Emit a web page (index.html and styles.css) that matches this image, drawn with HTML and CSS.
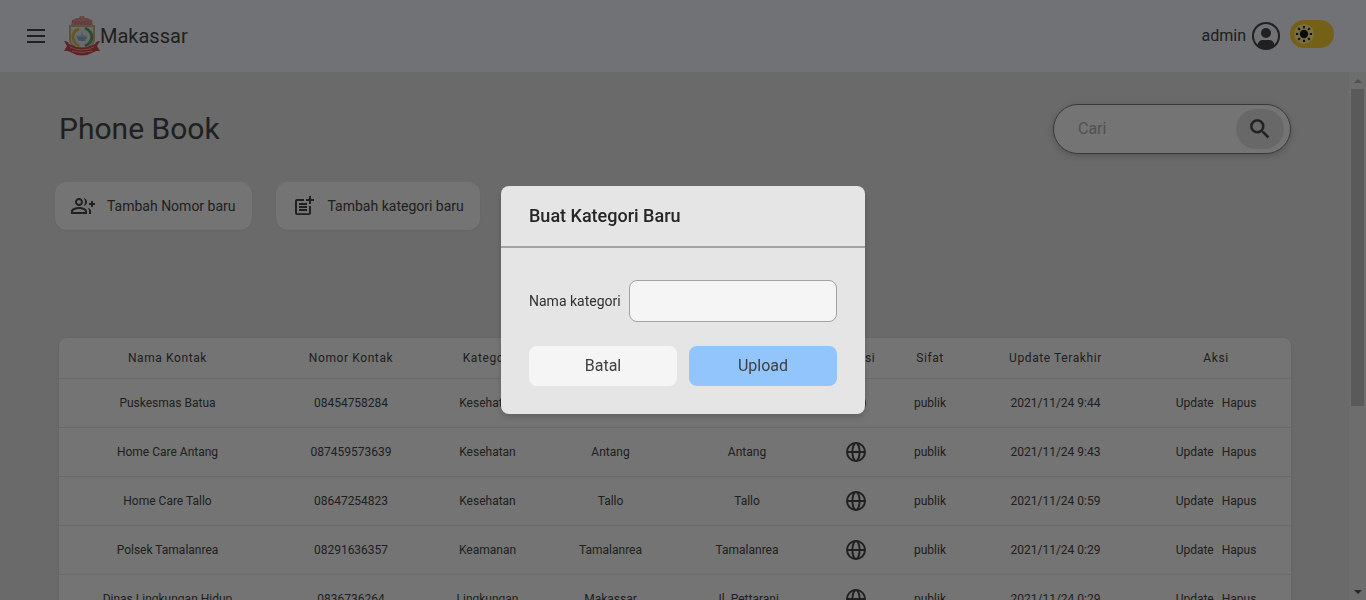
FILE: index.html
```html
<!DOCTYPE html>
<html lang="id">
<head>
<meta charset="utf-8">
<title>Phone Book - Makassar</title>
<link rel="stylesheet" href="styles.css">
</head>
<body>
<svg class="sprite" aria-hidden="true">
  <symbol id="globe" viewBox="0 0 24 24"><g fill="none" stroke="currentColor" stroke-width="2"><circle cx="12" cy="12" r="9"/><ellipse cx="12" cy="12" rx="3.6" ry="9"/><path d="M3 12h18"/></g></symbol>
</svg>
<div class="app">
  <header class="topbar">
    <button class="menu" type="button" aria-label="Menu"><svg viewBox="0 0 24 24"><path d="M3 19h18v-2H3v2zm0-6h18v-2H3v2zm0-8v2h18V5H3z"/></svg></button>
    <a class="brand" href="#">
      <svg class="crest" viewBox="0 0 36 40" aria-hidden="true">
        <path d="M7 10 8 4l3-1 1-1h3l1-2h4l1 2h3l1 1 3 1 1 6z" fill="#d08c88"/>
        <path d="M8 6h20M10 8h17" stroke="#bd6a67" fill="none" stroke-dasharray="2 1"/>
        <path d="M5 9h26v15q0 6-13 12Q5 30 5 24z" fill="#b3a67a"/>
        <path d="M7 11h22v13q0 5-11 10Q7 29 7 24z" fill="#d3d8d4"/>
        <path d="M15 13C7 16 7 25 15 30" fill="none" stroke="#c9ab4d" stroke-width="3"/>
        <path d="M21 12c9 4 9 14 0 18" fill="none" stroke="#5f9168" stroke-width="3"/>
        <path d="m18 14 1 5 4 1q-1 5-5 5t-6-5l5-1z" fill="#9fb9cd"/>
        <path d="M13 22h10M14 24h8" stroke="#668eb6" fill="none"/>
        <path d="M0 25q4 0 5 3 13 7 26 0 1-3 5-3l-3 5 3 5h-4l-2 1q-12 7-24 0l-2-1H0l3-5z" fill="#c44448"/>
        <path d="M6 31q12 6 24 0M8 35q10 3 20 0" fill="none" stroke="#d99a96"/>
      </svg>
      <span>Makassar</span>
    </a>
    <div class="account">
      <button class="user" type="button">admin
        <svg viewBox="0 0 28 28" aria-hidden="true"><circle cx="14" cy="14" r="13" fill="none" stroke="currentColor" stroke-width="2"/><circle cx="14" cy="11" r="5"/><path d="M5.500 23c1-4 3-5 5.500-5h6c2.500 0 4.500 1 5.500 5-4.500 5.500-12.500 5.500-17 0z"/></svg>
      </button>
      <button class="theme" type="button" aria-label="Mode terang"><span class="knob"><svg viewBox="0 0 20 20"><circle cx="10" cy="10" r="4.200"/><path d="M10 2v2.200M10 15.800V18M2 10h2.200M15.800 10H18M4.300 4.300l1.600 1.600M14.100 14.100l1.600 1.600M15.700 4.300l-1.600 1.600M5.900 14.100l-1.600 1.600" fill="none" stroke="currentColor" stroke-width="2"/></svg></span></button>
    </div>
  </header>
  <div class="viewport">
    <main class="content">
      <div class="heading">
        <h1>Phone Book</h1>
        <form class="search">
          <input type="text" placeholder="Cari" aria-label="Cari">
          <button type="button" aria-label="Cari"><svg viewBox="0 0 24 24"><path d="M15.500 14h-.79l-.28-.27A6.471 6.471 0 0 0 16 9.500 6.500 6.500 0 1 0 9.500 16c1.610 0 3.090-.59 4.230-1.570l.27.28v.79l5 4.990L20.490 19l-4.990-5zm-6 0C7.010 14 5 11.990 5 9.500S7.010 5 9.500 5 14 7.010 14 9.500 11.990 14 9.500 14z" stroke="currentColor" stroke-width=".3"/></svg></button>
        </form>
      </div>
      <div class="actions">
        <button type="button"><svg viewBox="0 0 24 24"><path d="M22 9V7h-2v2h-2v2h2v2h2v-2h2V9zM8 12c2.210 0 4-1.790 4-4s-1.790-4-4-4-4 1.790-4 4 1.790 4 4 4zm0-6c1.100 0 2 .9 2 2s-.9 2-2 2-2-.9-2-2 .9-2 2-2zm0 7c-2.670 0-8 1.340-8 4v3h16v-3c0-2.660-5.330-4-8-4zm6 5H2v-.99C2.200 16.290 5.300 15 8 15s5.800 1.290 6 2v1zM12.510 4.050C13.430 5.110 14 6.490 14 8s-.57 2.890-1.490 3.950C14.470 11.700 16 10.040 16 8s-1.530-3.700-3.490-3.950zm4.020 9.780C17.420 14.660 18 15.700 18 17v3h2v-3c0-1.450-1.590-2.510-3.470-3.170z"/></svg>Tambah Nomor baru</button>
        <button type="button"><svg viewBox="0 0 24 24"><path d="M17 19.220H5V7h7V5H5c-1.100 0-2 .9-2 2v12c0 1.100.9 2 2 2h12c1.100 0 2-.9 2-2v-7h-2v7.220zM19 2h-2v3h-3v2h3v2.990h2V7h3V5h-3zM7 9h8v2H7zM7 12v2h8v-2h-3zM7 15h8v2H7z"/></svg>Tambah kategori baru</button>
      </div>
      <table class="contacts">
        <colgroup><col class="w-name"><col class="w-md"><col class="w-sm"><col class="w-sm"><col class="w-md"><col class="w-icon"><col class="w-xs"><col class="w-date"><col class="w-md"></colgroup>
        <thead><tr><th>Nama Kontak</th><th>Nomor Kontak</th><th>Kategori</th><th></th><th></th><th>Lokasi</th><th>Sifat</th><th>Update Terakhir</th><th>Aksi</th></tr></thead>
        <tbody>
          <tr><td>Puskesmas Batua</td><td>08454758284</td><td>Kesehatan</td><td></td><td></td><td><a href="#" aria-label="Lokasi"><svg><use href="#globe"/></svg></a></td><td>publik</td><td>2021/11/24 9:44</td><td><a href="#">Update</a><a href="#">Hapus</a></td></tr>
          <tr><td>Home Care Antang</td><td>087459573639</td><td>Kesehatan</td><td>Antang</td><td>Antang</td><td><a href="#" aria-label="Lokasi"><svg><use href="#globe"/></svg></a></td><td>publik</td><td>2021/11/24 9:43</td><td><a href="#">Update</a><a href="#">Hapus</a></td></tr>
          <tr><td>Home Care Tallo</td><td>08647254823</td><td>Kesehatan</td><td>Tallo</td><td>Tallo</td><td><a href="#" aria-label="Lokasi"><svg><use href="#globe"/></svg></a></td><td>publik</td><td>2021/11/24 0:59</td><td><a href="#">Update</a><a href="#">Hapus</a></td></tr>
          <tr><td>Polsek Tamalanrea</td><td>08291636357</td><td>Keamanan</td><td>Tamalanrea</td><td>Tamalanrea</td><td><a href="#" aria-label="Lokasi"><svg><use href="#globe"/></svg></a></td><td>publik</td><td>2021/11/24 0:29</td><td><a href="#">Update</a><a href="#">Hapus</a></td></tr>
          <tr><td>Dinas Lingkungan Hidup</td><td>0836736264</td><td>Lingkungan</td><td>Makassar</td><td>Jl. Pettarani</td><td><a href="#" aria-label="Lokasi"><svg><use href="#globe"/></svg></a></td><td>publik</td><td>2021/11/24 0:29</td><td><a href="#">Update</a><a href="#">Hapus</a></td></tr>
        </tbody>
      </table>
    </main>
    <div class="scrollbar" aria-hidden="true"><span class="arrow up"></span><span class="thumb"></span><span class="arrow down"></span></div>
  </div>
</div>
<div class="overlay">
  <form class="modal" role="dialog" aria-labelledby="dialog-title">
    <h2 id="dialog-title">Buat Kategori Baru</h2>
    <div class="modal-body">
      <div class="field"><label for="category">Nama kategori</label><input id="category" type="text"></div>
      <div class="buttons"><button type="button">Batal</button><button class="primary" type="button">Upload</button></div>
    </div>
  </form>
</div>
</body>
</html>
```
FILE: styles.css
```css
* { box-sizing: border-box; }
body { margin: 0; font-family: Roboto, sans-serif; font-size: 16px; line-height: 24px; color: #404040; }
h1, h2 { margin: 0; }
button, input { font: inherit; color: inherit; border: 0; }
button { background: none; padding: 0; cursor: pointer; }
a { color: inherit; text-decoration: none; }
svg { fill: currentColor; display: block; flex-shrink: 0; }
.sprite { position: absolute; width: 0; height: 0; }

.app { height: 100vh; display: flex; flex-direction: column; overflow: hidden; background: #d4d4d4; }
.topbar { display: flex; align-items: center; height: 72px; padding: 0 32px 0 24px; background: #e2e4ea; flex-shrink: 0; }
.menu svg { width: 24px; height: 24px; }
.brand { display: flex; align-items: center; margin-left: 16px; font-size: 20px; }
.crest { width: 36px; height: 40px; }
.account { display: flex; align-items: center; gap: 10px; margin-left: auto; }
.user { display: flex; align-items: center; gap: 6px; }
.user svg { width: 28px; height: 28px; }
.theme { width: 44px; height: 28px; padding: 4px; margin-bottom: 4px; border-radius: 14px; background: #e8c02c; }
.knob { display: block; width: 20px; height: 20px; border-radius: 50%; background: #f0dc80; color: #171717; }

.viewport { display: flex; flex: 1; min-height: 0; overflow: hidden; }
.content { flex: 1; padding: 32px 54px 0 55px; }
.heading { display: flex; align-items: center; justify-content: space-between; margin: 0 4px; }
h1 { font-size: 30px; line-height: 36px; font-weight: 400; }
.search { display: flex; align-items: center; width: 238px; height: 50px; padding: 0 6px 0 24px; border: 1px solid #737373; border-radius: 25px; background: #e9e9e9; box-shadow: 0 2px 6px rgba(0,0,0,.2); }
.search input { flex: 1; min-width: 0; padding: 0; background: none; outline: 0; }
.search input::placeholder { color: #a3a3a3; }
.search button { display: grid; place-items: center; width: 48px; height: 40px; border-radius: 20px; background: #d0d0d0; }
.search svg { width: 26px; height: 26px; }
.actions { display: flex; gap: 24px; margin: 28px 0 108px; }
.actions button { display: flex; align-items: center; gap: 12px; height: 48px; padding: 0 16px; border-radius: 12px; background: #e9e9e9; font-size: 14px; box-shadow: 0 1px 2px rgba(0,0,0,.05); }
.actions svg { width: 24px; height: 24px; }

.contacts { width: calc(100% - 8px); margin: 0 4px; table-layout: fixed; border-spacing: 0; border-radius: 8px 8px 0 0; background: #e9e9e9; font-size: 12px; line-height: 16px; text-align: center; box-shadow: 0 1px 3px rgba(0,0,0,.1); }
.w-name { width: 217px; }
.w-date { width: 171px; }
.w-md { width: 150px; }
.w-sm { width: 123px; }
.w-xs { width: 80px; }
.w-icon { width: 68px; }
.contacts th { height: 40px; padding: 0; font-weight: 400; letter-spacing: .05em; }
.contacts td { height: 49px; padding: 0; border-top: 1px solid #d4d4d4; white-space: nowrap; }
.contacts td svg { width: 24px; height: 24px; margin: 0 auto; }
.contacts a + a { margin-left: 8px; }

.scrollbar { display: flex; flex-direction: column; align-items: center; width: 17px; background: #dadada; }
.arrow { width: 17px; height: 17px; display: grid; place-items: center; }
.arrow::after { content: ""; border: 4px solid transparent; }
.up::after { border-top: 0; border-bottom-color: #a3a3a3; }
.down { margin-top: auto; }
.down::after { border-bottom: 0; border-top-color: #505050; }
.thumb { width: 13px; height: 60%; background: #b5b5b5; }

.overlay { position: fixed; inset: 0; display: grid; place-items: center; background: rgba(0,0,0,.5); }
.modal { width: 364px; border-radius: 8px; background: #e5e5e5; box-shadow: 0 4px 6px rgba(0,0,0,.15); color: #404040; }
.modal h2 { padding: 18px 28px; border-bottom: 2px solid #a3a3a3; font-size: 18px; font-weight: 500; color: #262626; }
.modal-body { padding: 32px 28px 28px; }
.field { display: flex; align-items: center; gap: 8px; font-size: 14px; }
.field label { color: #303030; white-space: nowrap; }
.field input { flex: 1; min-width: 0; height: 42px; padding: 8px; border: 1px solid #a3a3a3; border-radius: 8px; background: #f5f5f5; }
.buttons { display: grid; grid-template-columns: 1fr 1fr; gap: 12px; margin-top: 24px; }
.buttons button { height: 40px; border-radius: 8px; background: #f5f5f5; }
.buttons .primary { background: #93c5fd; }
```
